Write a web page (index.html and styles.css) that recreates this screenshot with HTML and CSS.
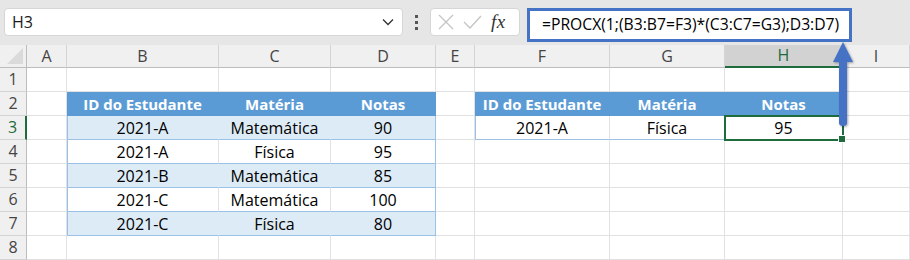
FILE: index.html
```html
<!DOCTYPE html>
<html lang="pt">
<head>
    <meta charset="UTF-8">
    <title>PROCX</title>
    <link rel="stylesheet" href="styles.css">
</head>
<body>
    <div class="sheet">
        <div class="formula-bar">
            <div class="name-box">
                <span>H3</span>
                <svg class="chevron" width="12" height="8" viewBox="0 0 12 8"><path d="M1 1.5 L6 6.5 L11 1.5" fill="none" stroke="#333" stroke-width="1.3"/></svg>
            </div>
            <div class="grip"><i></i><i></i><i></i></div>
            <div class="fx-box">
                <svg width="18" height="18" viewBox="0 0 18 18"><path d="M2 2 L16 16 M16 2 L2 16" stroke="#c4c4c4" stroke-width="1.3"/></svg>
                <svg width="20" height="18" viewBox="0 0 20 18"><path d="M2 9 L8 15 L19 3" fill="none" stroke="#c4c4c4" stroke-width="1.3"/></svg>
                <span class="fx">fx</span>
            </div>
            <div class="formula">=PROCX(1;(B3:B7=F3)*(C3:C7=G3);D3:D7)</div>
        </div>

        <div class="grid">
            <div class="corner"><span></span></div>
            <div class="col-head">A</div>
            <div class="col-head">B</div>
            <div class="col-head">C</div>
            <div class="col-head">D</div>
            <div class="col-head">E</div>
            <div class="col-head">F</div>
            <div class="col-head">G</div>
            <div class="col-head active">H</div>
            <div class="col-head">I</div>

            <!-- linha 1 -->
            <div class="row-head">1</div>
            <div class="cell"></div><div class="cell"></div><div class="cell"></div><div class="cell"></div>
            <div class="cell"></div><div class="cell"></div><div class="cell"></div><div class="cell"></div><div class="cell"></div>

            <!-- linha 2 -->
            <div class="row-head">2</div>
            <div class="cell"></div>
            <div class="cell th">ID do Estudante</div>
            <div class="cell th">Matéria</div>
            <div class="cell th">Notas</div>
            <div class="cell"></div>
            <div class="cell th">ID do Estudante</div>
            <div class="cell th">Matéria</div>
            <div class="cell th">Notas</div>
            <div class="cell"></div>

            <!-- linha 3 -->
            <div class="row-head active">3</div>
            <div class="cell"></div>
            <div class="cell td band first">2021-A</div>
            <div class="cell td band">Matemática</div>
            <div class="cell td band last">90</div>
            <div class="cell"></div>
            <div class="cell td first lookup">2021-A</div>
            <div class="cell td lookup">Física</div>
            <div class="cell td selected">95<span class="handle"></span></div>
            <div class="cell"></div>

            <!-- linha 4 -->
            <div class="row-head">4</div>
            <div class="cell"></div>
            <div class="cell td first">2021-A</div>
            <div class="cell td">Física</div>
            <div class="cell td last">95</div>
            <div class="cell"></div><div class="cell"></div><div class="cell"></div><div class="cell"></div><div class="cell"></div>

            <!-- linha 5 -->
            <div class="row-head">5</div>
            <div class="cell"></div>
            <div class="cell td band first">2021-B</div>
            <div class="cell td band">Matemática</div>
            <div class="cell td band last">85</div>
            <div class="cell"></div><div class="cell"></div><div class="cell"></div><div class="cell"></div><div class="cell"></div>

            <!-- linha 6 -->
            <div class="row-head">6</div>
            <div class="cell"></div>
            <div class="cell td first">2021-C</div>
            <div class="cell td">Matemática</div>
            <div class="cell td last">100</div>
            <div class="cell"></div><div class="cell"></div><div class="cell"></div><div class="cell"></div><div class="cell"></div>

            <!-- linha 7 -->
            <div class="row-head">7</div>
            <div class="cell"></div>
            <div class="cell td band first">2021-C</div>
            <div class="cell td band">Física</div>
            <div class="cell td band last">80</div>
            <div class="cell"></div><div class="cell"></div><div class="cell"></div><div class="cell"></div><div class="cell"></div>

            <!-- linha 8 -->
            <div class="row-head">8</div>
            <div class="cell"></div><div class="cell"></div><div class="cell"></div><div class="cell"></div>
            <div class="cell"></div><div class="cell"></div><div class="cell"></div><div class="cell"></div><div class="cell"></div>
        </div>

        <!-- seta da célula até a barra de fórmulas -->
        <svg class="arrow" width="26" height="90" viewBox="0 0 26 90">
            <defs>
                <filter id="sh" x="-50%" y="-20%" width="200%" height="140%">
                    <feDropShadow dx="1" dy="1" stdDeviation="1.2" flood-color="#000" flood-opacity="0.35"/>
                </filter>
            </defs>
            <path d="M13 1 L23 21 L17 21 L17 82 Q17 85 13 85 Q9 85 9 82 L9 21 L3 21 Z" fill="#4472c4" filter="url(#sh)"/>
        </svg>
    </div>
</body>
</html>
```

FILE: styles.css
```css
/* Base */
body {
    margin: 0;
    background-color: #ffffff;
    font-family: "Open Sans", "Noto Sans", sans-serif;
    color: #1b1b1b;
    overflow: hidden;
}
.sheet {
    position: relative;
    width: 910px;
    height: 260px;
}

/* Barra de fórmulas */
.formula-bar {
    height: 45px;
    background-color: #e6e6e6;
    display: flex;
    align-items: flex-start;
    padding-top: 8px;
    box-sizing: border-box;
}
.name-box {
    margin-left: 4px;
    width: 399px;
    height: 28px;
    box-sizing: border-box;
    background-color: #fff;
    border: 1px solid #d6d6d6;
    border-radius: 4px;
    display: flex;
    align-items: center;
    justify-content: space-between;
    padding: 0 8px 0 7px;
    font-size: 16px;
}
.grip {
    width: 27px;
    height: 28px;
    display: flex;
    flex-direction: column;
    align-items: center;
    justify-content: center;
    gap: 3px;
}
.grip i {
    width: 3px;
    height: 3px;
    background-color: #555;
}
.fx-box {
    width: 90px;
    height: 28px;
    box-sizing: border-box;
    background-color: #fff;
    border: 1px solid #d6d6d6;
    border-radius: 4px;
    display: flex;
    align-items: center;
    gap: 7px;
    padding-left: 6px;
}
.fx {
    font-family: "Liberation Serif", serif;
    font-style: italic;
    font-size: 19px;
    color: #333;
    margin-left: 2px;
    letter-spacing: 0.5px;
}
.formula {
    margin-left: 7px;
    width: 325px;
    height: 34px;
    box-sizing: border-box;
    background-color: #fff;
    border: 3px solid #4472c4;
    padding-left: 12px;
    font-size: 15.7px;
    line-height: 27px;
    color: #000;
    white-space: nowrap;
}

/* Grade da planilha */
.grid {
    display: grid;
    grid-template-columns: 27px 40px 152px 112px 105px 39px 135px 115px 118px 67px;
    grid-template-rows: 23px repeat(8, 24px);
}
.corner {
    background-color: #f0f0f0;
    border-right: 1px solid #bdbdbd;
    border-bottom: 1px solid #bdbdbd;
    position: relative;
}
.corner span {
    position: absolute;
    right: 3px;
    bottom: 3px;
    width: 0;
    height: 0;
    border-left: 16px solid transparent;
    border-bottom: 16px solid #dadada;
}
.col-head {
    background-color: #f0f0f0;
    border-right: 1px solid #d4d4d4;
    border-bottom: 1px solid #bdbdbd;
    font-size: 16px;
    color: #444;
    text-align: center;
    line-height: 22px;
}
.col-head.active {
    background-color: #d2d2d2;
    color: #1e6b3c;
    border-bottom: 2px solid #1e6b3c;
    line-height: 21px;
}
.row-head {
    background-color: #f0f0f0;
    border-right: 1px solid #bdbdbd;
    border-bottom: 1px solid #d4d4d4;
    font-size: 16px;
    color: #444;
    text-align: center;
    line-height: 23px;
}
.row-head.active {
    color: #1e6b3c;
    border-right: 2px solid #1e6b3c;
}
.cell {
    border-right: 1px solid #e1e1e1;
    border-bottom: 1px solid #e1e1e1;
    font-size: 16px;
    text-align: center;
    line-height: 24px;
    white-space: nowrap;
    position: relative;
}
.th {
    background-color: #5b9bd5;
    color: #fff;
    font-weight: bold;
    font-size: 15px;
    border-right-color: #5b9bd5;
    border-bottom-color: #5b9bd5;
}
.td {
    border-bottom-color: #9bc2e6;
    border-right-color: #e1e1e1;
    color: #000;
}
.band {
    background-color: #ddebf7;
    border-right-color: #ddebf7;
}
.first {
    box-shadow: inset 1px 0 0 #9bc2e6;
}
.last {
    border-right-color: #9bc2e6;
}
.lookup {
    border-bottom-color: #9bc2e6;
}

/* Célula selecionada */
.selected {
    outline: 2px solid #1e6b3c;
    outline-offset: -1px;
    z-index: 1;
}
.handle {
    position: absolute;
    right: -4px;
    bottom: -4px;
    width: 6px;
    height: 6px;
    background-color: #1e6b3c;
    border: 1px solid #fff;
}

/* Seta */
.arrow {
    position: absolute;
    left: 830px;
    top: 41px;
    z-index: 2;
}
```
